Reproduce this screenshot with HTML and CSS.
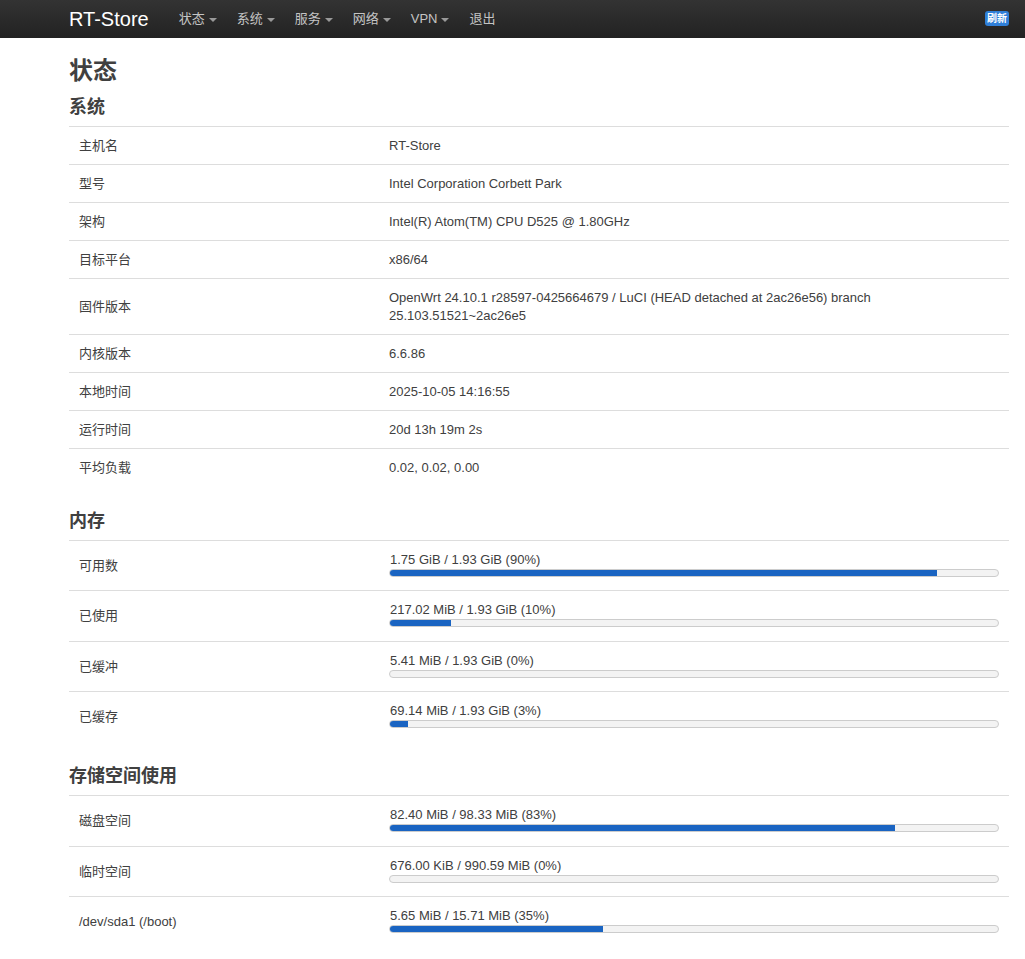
FILE: index.html
```html
<!DOCTYPE html>
<html lang="zh-CN">
<head>
<meta charset="utf-8">
<title>RT-Store - 状态</title>
<link rel="stylesheet" href="styles.css">
</head>
<body>
<header class="topbar">
  <div class="topbar-inner">
    <a class="brand" href="#">RT-Store</a>
    <ul class="nav">
      <li class="nav-item"><span>状态</span><b class="caret"></b></li>
      <li class="nav-item"><span>系统</span><b class="caret"></b></li>
      <li class="nav-item"><span>服务</span><b class="caret"></b></li>
      <li class="nav-item"><span>网络</span><b class="caret"></b></li>
      <li class="nav-item"><span>VPN</span><b class="caret"></b></li>
      <li class="nav-item"><span>退出</span></li>
    </ul>
    <span class="refresh">刷新</span>
  </div>
</header>

<main class="container">
  <h2 class="page-title">状态</h2>

  <section class="section">
    <h3 class="section-title">系统</h3>
    <div class="table">
      <div class="tr"><div class="td label">主机名</div><div class="td value">RT-Store</div></div>
      <div class="tr"><div class="td label">型号</div><div class="td value">Intel Corporation Corbett Park</div></div>
      <div class="tr"><div class="td label">架构</div><div class="td value">Intel(R) Atom(TM) CPU D525 @ 1.80GHz</div></div>
      <div class="tr"><div class="td label">目标平台</div><div class="td value">x86/64</div></div>
      <div class="tr"><div class="td label">固件版本</div><div class="td value">OpenWrt 24.10.1 r28597-0425664679 / LuCI (HEAD detached at 2ac26e56) branch 25.103.51521~2ac26e5</div></div>
      <div class="tr"><div class="td label">内核版本</div><div class="td value">6.6.86</div></div>
      <div class="tr"><div class="td label">本地时间</div><div class="td value">2025-10-05 14:16:55</div></div>
      <div class="tr"><div class="td label">运行时间</div><div class="td value">20d 13h 19m 2s</div></div>
      <div class="tr"><div class="td label">平均负载</div><div class="td value">0.02, 0.02, 0.00</div></div>
    </div>
  </section>

  <section class="section">
    <h3 class="section-title">内存</h3>
    <div class="table">
      <div class="tr bar-row"><div class="td label">可用数</div><div class="td value"><div class="bar-text">1.75 GiB / 1.93 GiB (90%)</div><div class="bar"><div class="fill" style="width:90%"></div></div></div></div>
      <div class="tr bar-row"><div class="td label">已使用</div><div class="td value"><div class="bar-text">217.02 MiB / 1.93 GiB (10%)</div><div class="bar"><div class="fill" style="width:10%"></div></div></div></div>
      <div class="tr bar-row"><div class="td label">已缓冲</div><div class="td value"><div class="bar-text">5.41 MiB / 1.93 GiB (0%)</div><div class="bar"><div class="fill" style="width:0%"></div></div></div></div>
      <div class="tr bar-row"><div class="td label">已缓存</div><div class="td value"><div class="bar-text">69.14 MiB / 1.93 GiB (3%)</div><div class="bar"><div class="fill" style="width:3%"></div></div></div></div>
    </div>
  </section>

  <section class="section">
    <h3 class="section-title">存储空间使用</h3>
    <div class="table">
      <div class="tr bar-row"><div class="td label">磁盘空间</div><div class="td value"><div class="bar-text">82.40 MiB / 98.33 MiB (83%)</div><div class="bar"><div class="fill" style="width:83%"></div></div></div></div>
      <div class="tr bar-row"><div class="td label">临时空间</div><div class="td value"><div class="bar-text">676.00 KiB / 990.59 MiB (0%)</div><div class="bar"><div class="fill" style="width:0%"></div></div></div></div>
      <div class="tr bar-row"><div class="td label">/dev/sda1 (/boot)</div><div class="td value"><div class="bar-text">5.65 MiB / 15.71 MiB (35%)</div><div class="bar"><div class="fill" style="width:35%"></div></div></div></div>
    </div>
  </section>
</main>
</body>
</html>
```

FILE: styles.css
```css
* { box-sizing: border-box; }

html, body {
  margin: 0;
  padding: 0;
  background: #fff;
}

body {
  font-family: "Liberation Sans", Arial, "Noto Sans CJK SC", sans-serif;
  font-size: 13px;
  line-height: 18px;
  color: #404040;
}

/* ---------- top bar ---------- */
.topbar {
  height: 38px;
  background: linear-gradient(to bottom, #333333, #222222);
}

.topbar-inner {
  width: 940px;
  margin-left: 69px;
  height: 38px;
  display: flex;
  align-items: center;
}

.brand {
  color: #ffffff;
  font-size: 20px;
  line-height: 38px;
  text-decoration: none;
  padding-right: 20px;
}

.nav {
  list-style: none;
  margin: 0;
  padding: 0;
  display: flex;
  align-items: center;
  flex: 1;
}

.nav-item {
  display: flex;
  align-items: center;
  padding: 0 10px;
  color: #c4c4c4;
  font-size: 13px;
  line-height: 38px;
}

.caret {
  display: inline-block;
  width: 0;
  height: 0;
  margin-left: 4px;
  margin-top: 1px;
  border-top: 4px solid #999;
  border-left: 4px solid transparent;
  border-right: 4px solid transparent;
}

.refresh {
  background: #2f7fd8;
  color: #fff;
  font-size: 10px;
  font-weight: bold;
  line-height: 15px;
  height: 15px;
  padding: 0 2px;
  border-radius: 3px;
  margin-top: -1px;
}

/* ---------- content ---------- */
.container {
  width: 940px;
  margin-left: 69px;
}

.page-title {
  margin: 18px 0 0;
  font-size: 24px;
  line-height: 30px;
  font-weight: bold;
  color: #404040;
}

.section-title {
  margin: 0 0 7px;
  font-size: 18px;
  line-height: 24px;
  font-weight: bold;
  color: #404040;
}

.section { margin-top: 23px; }
.page-title + .section { margin-top: 9px; }

.table {
  display: flex;
  flex-direction: column;
}

.tr {
  display: flex;
  border-top: 1px solid #dddddd;
}

.td {
  padding: 10px 10px 9px;
}

.td.label {
  width: 310px;
  flex: none;
  display: flex;
  align-items: center;
}

.td.value {
  flex: 1;
}

.bar-row .td.value {
  padding: 10px 10px 13.33px;
}

.bar-text {
  padding-left: 1px;
}

.bar {
  height: 8px;
  border: 1px solid #cccccc;
  border-radius: 4px;
  background: #f3f3f3;
  overflow: hidden;
}

.fill {
  height: 100%;
  background: #1a64c2;
}
```
